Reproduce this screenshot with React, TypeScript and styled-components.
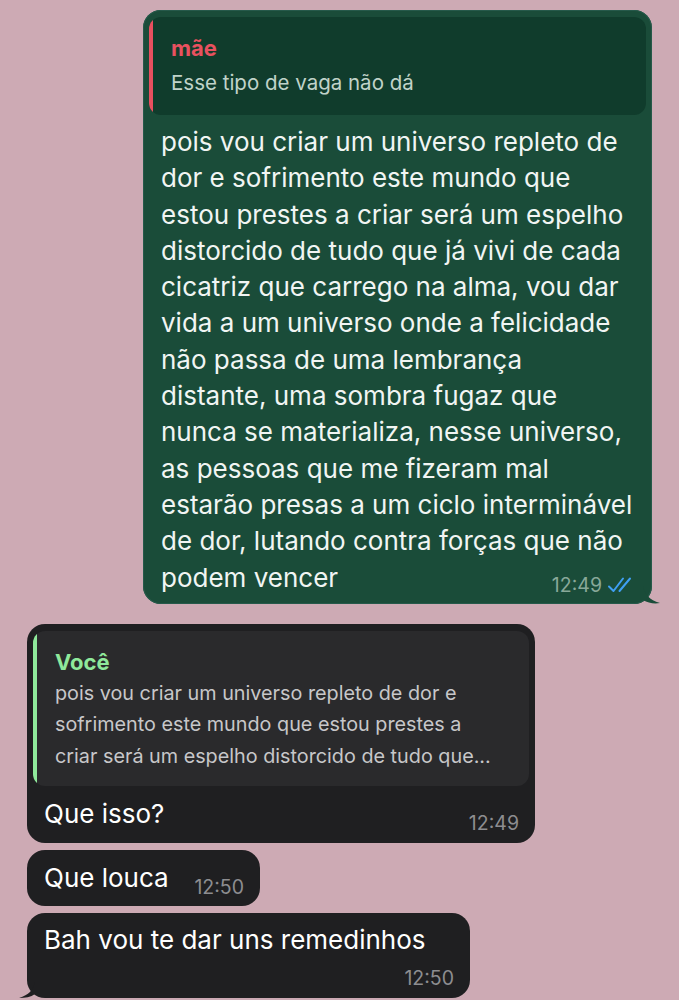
import styled, { createGlobalStyle } from 'styled-components';

const GlobalStyle = createGlobalStyle`
  html, body {
    margin: 0;
    padding: 0;
    background: #cdaab4;
  }
  body {
    font-family: Inter, "Noto Sans", "Liberation Sans", sans-serif;
    -webkit-font-smoothing: antialiased;
  }
`;

const Chat = styled.div`
  display: flex;
  flex-direction: column;
  width: 679px;
  height: 1000px;
  padding-top: 10px;
  box-sizing: border-box;
  overflow: hidden;
`;

const Bubble = styled.div<{ $out?: boolean; $width: number; $gapAfter?: number; $bottom?: number }>`
  position: relative;
  box-sizing: border-box;
  width: ${(p) => p.$width}px;
  margin-left: ${(p) => (p.$out ? 143 : 27)}px;
  margin-bottom: ${(p) => p.$gapAfter ?? 7}px;
  border-radius: 18px;
  background: ${(p) => (p.$out ? '#1a4c39' : '#1f1f21')};
  box-shadow: ${(p) => (p.$out ? 'inset 0 0 0 1px #26594a' : 'none')};
  padding: 7px 6px ${(p) => p.$bottom ?? 8}px 6px;
`;

const Quote = styled.div<{ $out?: boolean }>`
  position: relative;
  border-radius: 12px;
  overflow: hidden;
  background: ${(p) => (p.$out ? '#103c2c' : '#2a2a2c')};
  padding: 17px 10px ${(p) => (p.$out ? 17 : 14)}px 22px;

  &::before {
    content: '';
    position: absolute;
    left: 0;
    top: 0;
    bottom: 0;
    width: 4px;
    background: ${(p) => (p.$out ? '#e8505f' : '#8fe99b')};
  }
`;

const QuoteName = styled.div<{ $color: string }>`
  color: ${(p) => p.$color};
  font-weight: 700;
  font-size: 22px;
  line-height: 28px;
`;

const QuoteText = styled.div<{ $out?: boolean }>`
  color: ${(p) => (p.$out ? '#c0d3c9' : '#c7c7c9')};
  font-size: ${(p) => (p.$out ? 20.5 : 19.8)}px;
  line-height: ${(p) => (p.$out ? 30 : 31.5)}px;
  margin-top: ${(p) => (p.$out ? 6 : 2)}px;
  white-space: nowrap;
`;

const Body = styled.div<{ $out?: boolean; $top?: number }>`
  color: ${(p) => (p.$out ? '#f1f5f3' : '#ffffff')};
  font-size: 26px;
  line-height: 36.3px;
  padding: ${(p) => p.$top ?? 0}px ${(p) => (p.$out ? '12px' : '10px')} 0 ${(p) => (p.$out ? '12px' : '11px')};
`;

const Line = styled.div`
  white-space: nowrap;
`;

const LastRow = styled.div<{ $mt?: number }>`
  display: flex;
  align-items: flex-end;
  white-space: nowrap;
  margin-top: ${(p) => p.$mt ?? 0}px;
`;

const Meta = styled.span<{ $out?: boolean; $drop?: number }>`
  display: inline-flex;
  align-items: center;
  gap: 5px;
  margin-left: auto;
  padding-left: 20px;
  font-size: 19.5px;
  line-height: 20px;
  transform: translateY(${(p) => p.$drop ?? 0}px);
  color: ${(p) => (p.$out ? '#88a899' : '#8d8d90')};
`;

const Tail = styled.svg<{ $side: 'left' | 'right' }>`
  position: absolute;
  bottom: 0;
  ${(p) => (p.$side === 'right' ? 'right: -11px;' : 'left: -8px;')}
`;

const Checks = () => (
  <svg width="27" height="18" viewBox="0 0 27 18" fill="none">
    <path d="M2 10.5 L6.5 15 L16 2.5" stroke="#3f9ff3" strokeWidth="2" strokeLinecap="round" strokeLinejoin="round" />
    <path d="M12.5 15 L23 2.5" stroke="#3f9ff3" strokeWidth="2" strokeLinecap="round" strokeLinejoin="round" />
  </svg>
);

const outgoing = [
  'pois vou criar um universo repleto de',
  'dor e sofrimento este mundo que',
  'estou prestes a criar será um espelho',
  'distorcido de tudo que já vivi de cada',
  'cicatriz que carrego na alma, vou dar',
  'vida a um universo onde a felicidade',
  'não passa de uma lembrança',
  'distante, uma sombra fugaz que',
  'nunca se materializa, nesse universo,',
  'as pessoas que me fizeram mal',
  'estarão presas a um ciclo interminável',
  'de dor, lutando contra forças que não',
];

const quoted = [
  'pois vou criar um universo repleto de dor e',
  'sofrimento este mundo que estou prestes a',
  'criar será um espelho distorcido de tudo que...',
];

const App = () => {
  return (
    <>
      <GlobalStyle />
      <Chat>
        <Bubble $out $width={509} $gapAfter={20}>
          <Quote $out>
            <QuoteName $color="#e8515f">mãe</QuoteName>
            <QuoteText $out>Esse tipo de vaga não dá</QuoteText>
          </Quote>
          <Body $out $top={9}>
            {outgoing.map((l) => (
              <Line key={l}>{l}</Line>
            ))}
            <LastRow>
              <span>podem vencer</span>
              <Meta $out $drop={-1}>
                12:49
                <Checks />
              </Meta>
            </LastRow>
          </Body>
          <Tail $side="right" width="20" height="18" viewBox="0 0 20 18">
            <path d="M0 0 C2 8 6 14 17 17 C11 18 5 17 0 14 Z" fill="#1a4c39" />
          </Tail>
        </Bubble>

        <Bubble $width={508} $bottom={10}>
          <Quote>
            <QuoteName $color="#8fe99b">Você</QuoteName>
            <QuoteText>
              {quoted.map((l) => (
                <div key={l}>{l}</div>
              ))}
            </QuoteText>
          </Quote>
          <Body $top={10}>
            <LastRow>
              <span>Que isso?</span>
              <Meta>12:49</Meta>
            </LastRow>
          </Body>
        </Bubble>

        <Bubble $width={233} $bottom={10}>
          <Body $top={3}>
            <LastRow>
              <span>Que louca</span>
              <Meta $drop={1}>12:50</Meta>
            </LastRow>
          </Body>
        </Bubble>

        <Bubble $width={443} $bottom={10}>
          <Body $top={2}>
            <Line>Bah vou te dar uns remedinhos</Line>
            <LastRow $mt={10}>
              <Meta>12:50</Meta>
            </LastRow>
          </Body>
          <Tail $side="left" width="16" height="16" viewBox="0 0 16 16">
            <path d="M16 0 C14 8 10 13 0 16 C6 16 12 15 16 12 Z" fill="#1f1f21" />
          </Tail>
        </Bubble>
      </Chat>
    </>
  );
};

export default App;
